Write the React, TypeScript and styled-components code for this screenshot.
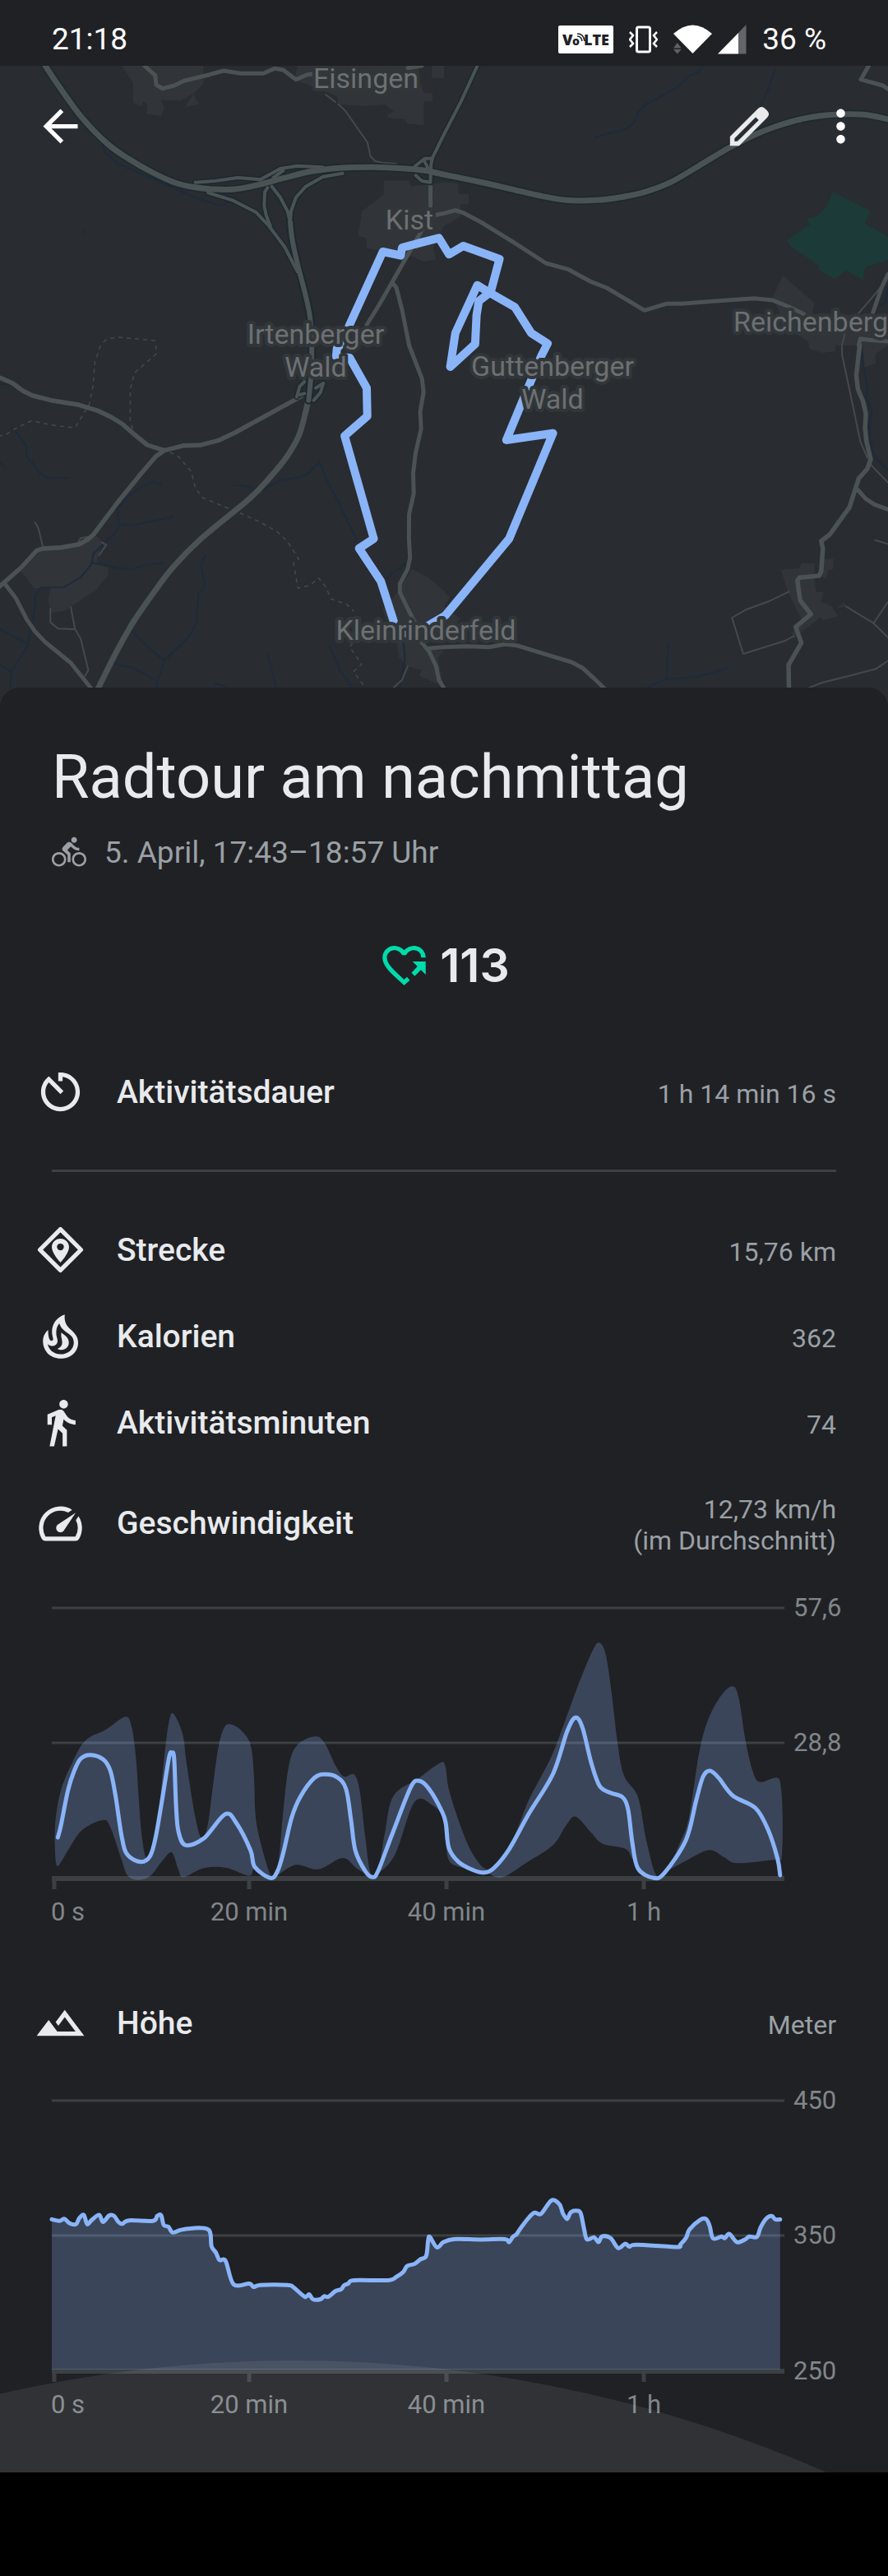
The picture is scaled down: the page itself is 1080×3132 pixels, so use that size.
import React from "react";
import styled, { createGlobalStyle } from "styled-components";
import { MdArrowBack, MdDirectionsBike, MdDirectionsWalk, MdMoreVert } from "react-icons/md";

const color = {
  surface: "#202124",
  text: "#e8eaed",
  textDim: "#9aa0a6",
  axis: "#80868b",
  line: "#3c4043",
  accent: "#8ab4f8",
  points: "#00dbac",
  land: "#292c31",
  town: "#313439",
  road: "#4b5254",
  casing: "#1b2930",
  water: "#1d2b3a",
  forest: "#1b3a38",
  place: "#6d7073",
  halo: "#313639",
};

/* ---------- geometry helpers ---------- */

type Point = [number, number];
type Sheet = { x: number; y: number; kx: number; ky: number };

const sheet = (x: number, y: number, ky = 3): Sheet => ({ x, y, kx: 2.9037, ky });

const plot = (s: Sheet, coords: string): Point[] =>
  coords
    .trim()
    .split(/\s+/)
    .map((pair) => {
      const [x, y] = pair.split(",").map(Number);
      return [s.x + x / s.kx, s.y + y / s.ky];
    });

const fmt = (n: number) => n.toFixed(1);

const polyline = (points: Point[]) => "M" + points.map(([x, y]) => `${fmt(x)} ${fmt(y)}`).join("L");

const smooth = (p: Point[]) => {
  let d = `M${fmt(p[0][0])} ${fmt(p[0][1])}`;
  for (let i = 0; i < p.length - 1; i++) {
    const a = p[i - 1] ?? p[i];
    const b = p[i];
    const c = p[i + 1];
    const e = p[i + 2] ?? c;
    d += `C${fmt(b[0] + (c[0] - a[0]) / 6)} ${fmt(b[1] + (c[1] - a[1]) / 6)} ${fmt(c[0] - (e[0] - b[0]) / 6)} ${fmt(
      c[1] - (e[1] - b[1]) / 6,
    )} ${fmt(c[0])} ${fmt(c[1])}`;
  }
  return d;
};

/* ---------- map data, one sheet per quadrant ---------- */

const NW = sheet(0, 0);
const NE = sheet(540, 0);
const SW = sheet(0, 420);
const SE = sheet(540, 420);

const lines = (s: Sheet, list: string[]) => list.map((c) => polyline(plot(s, c))).join("");

const towns = [
  ...[
    "430,240 470,300 470,375 500,390 505,370 520,380 517,415 570,424 580,390 568,365 640,367 685,340 718,305 718,240",
    "685,340 690,360 705,378 652,392",
    "1050,240 1040,290 1190,350 1195,380 1285,387 1360,382 1390,408 1368,418 1370,430 1430,435 1440,452 1497,457 1497,370 1528,370 1528,342 1497,338 1480,290 1480,240",
    "1525,240 1525,285 1568,285 1568,240",
  ].map((c) => plot(NW, c)),
  [
    ...plot(NW, "1355,658 1445,658 1450,680 1568,665"),
    ...plot(NE, "50,668 52,708 88,708 88,745 58,745 60,790 0,825"),
    ...plot(NW, "1530,905 1540,945 1500,955 1455,935 1295,905 1293,868 1265,860 1278,770 1355,710"),
  ],
  plot(NE, "1197,1005 1308,1105 1300,1145 1568,1150 1568,1260 1290,1260 1285,1245 1215,1200 1160,1085"),
  plot(SW, "150,745 280,730 340,695 362,718 340,790 382,808 382,835 340,892 225,970 180,975 170,930 178,885 120,885 75,825 130,765"),
  [
    ...plot(SW, "1455,815 1510,845 1568,895"),
    ...plot(SE, "20,918 0,950 60,1000"),
    ...plot(
      SW,
      "1490,1085 1485,1100 1568,1115 1545,1140 1568,1245 1480,1205 1490,1185 1440,1170 1410,1140 1400,1085 1350,960 1400,905",
    ),
  ],
  ...[
    "1190,818 1255,812 1262,795 1308,795 1308,860 1315,900 1340,900 1332,935 1370,952 1393,988 1340,1002 1330,990 1235,1070 1228,1050 1262,1000 1215,900",
    "1340,780 1375,778 1375,815 1358,818 1350,850 1335,845",
    "1480,0 1568,0 1525,30 1525,65 1485,80",
    "1287,0 1382,0 1382,22 1335,27 1290,12",
    "1390,958 1412,935 1422,952",
  ].map((c) => plot(SE, c)),
];

const forest = polyline(
  plot(
    NE,
    "1372,700 1505,768 1487,815 1568,862 1568,950 1487,975 1480,1022 1420,987 1380,1018 1322,985 1325,970 1225,900 1210,877 1290,820 1283,798 1320,785 1350,755",
  ),
);

const water =
  lines(NW, ["365,530 370,555 420,600 490,630 600,680 700,725 770,748 795,746 805,735", "298,835 300,850"]) +
  lines(NE, [
    "910,240 900,263 870,275 820,320 770,350 715,380 685,410 670,450 640,472 580,487 535,500",
    "1170,250 1145,325 1120,385",
    "1568,1045 1558,1105 1540,1115",
  ]) +
  lines(SW, [
    "0,142 45,140",
    "0,427 18,445",
    "40,300 60,320 95,370 92,400 140,465 165,482 240,483",
    "568,505 540,497 500,515 440,560 415,595 420,655 410,680 330,760 322,800 285,845 225,882 145,883 125,910 122,960 100,1090 40,1190 35,1250",
    "420,655 480,653 610,625",
    "322,792 420,812 465,817 520,800 575,793",
    "0,1035 100,1090",
    "0,1165 40,1190",
    "725,765 710,800 722,870 700,910 695,1010 670,1060 580,1150 550,1248",
    "468,1045 510,1090 580,1150",
    "400,1160 470,1175 550,1223",
    "825,510 885,515 895,528",
    "935,522 990,493 1060,480 1090,465 1128,425 1165,515 1190,560 1260,710",
    "1355,858 1430,795",
    "945,1125 975,1248",
    "1163,1095 1200,1185 1243,1245",
    "755,1230 800,1245",
    "1425,1085 1430,1145 1410,1248",
  ]) +
  lines(SE, [
    "720,1248 780,1218 895,1208 1000,1178",
    "792,1090 785,1218",
    "1470,0 1480,70 1495,150 1492,190 1512,240 1500,290 1515,400 1568,455",
  ]);

const motorway = smooth([
  ...plot(
    NW,
    "160,240 205,310 290,430 380,525 455,580 540,630 615,665 680,682 750,690 830,690 920,672 1000,650 1100,625 1210,612 1320,610 1420,614 1500,622",
  ),
  ...plot(
    NE,
    "0,637 110,660 230,688 330,712 430,730 540,730 620,720 710,700 800,665 900,605 1000,543 1090,495 1170,462 1260,435 1350,420 1480,418 1568,435",
  ),
]);

const ramps =
  lines(NW, [
    "735,703 820,730 905,775 950,825 1005,900 1050,990",
    "945,685 935,700 933,750 940,785 955,825",
    "1025,810 1028,770 1045,720 1080,680 1140,645 1210,632",
    "960,680 990,720 1015,770 1025,810",
    "690,665 760,660 840,648 920,655 990,615 1050,605 1140,610",
    "965,648 1000,622",
    "1465,607 1500,578 1527,578 1522,600 1520,665 1490,660 1468,640",
    "1500,590 1510,610",
  ]) +
  polyline([...plot(NW, "1525,580"), ...plot(NE, "0,490 60,370 118,240")]) +
  lines(SW, ["1048,188 1058,150 1075,132", "1060,180 1075,175", "1108,200 1132,172 1142,138 1115,155"]);

const trunk = smooth([
  ...plot(NW, "1025,810 1033,880 1055,980 1080,1080 1095,1160"),
  ...plot(SW, "1101,0 1099,100 1090,200"),
]);

const roads =
  lines(NW, [
    "510,240 548,275 552,310 575,323 615,312 650,295 740,272 790,258 850,268 930,268 970,250 1000,255 1045,290 1085,272 1105,270",
    "1440,248 1490,240",
    "1520,680 1520,750",
    "1490,840 1440,930 1390,1020 1340,1110 1295,1185",
  ]) +
  polyline([
    ...plot(NW, "1535,785"),
    ...plot(
      NE,
      "0,778 40,767 65,775 130,810 240,880 360,960 440,983 520,1028 575,1050 640,1090 708,1132 785,1108 840,1108 960,1098 1095,1088 1160,1095 1220,1120 1270,1145",
    ),
  ]) +
  lines(NE, ["1500,240 1472,290 1550,312 1568,325", "1568,1000 1545,1050 1515,1140", "1465,1260 1470,1235 1500,1240 1568,1245"]) +
  polyline([
    ...plot(NW, "1385,1030 1400,1050 1420,1130"),
    ...plot(
      SW,
      "1445,0 1490,120 1496,170 1484,240 1487,305 1468,390 1459,465 1461,540 1445,615 1444,700 1448,775 1440,815 1412,870 1412,900 1440,960 1465,1010 1490,1085 1515,1115 1540,1170 1550,1220 1568,1250",
    ),
  ]) +
  polyline([
    ...plot(SW, "1515,1105"),
    ...plot(SE, "0,1100 80,1097 160,1100 215,1090 260,1095 360,1127 450,1155 490,1177 525,1210 570,1255"),
  ]) +
  lines(SE, ["1460,525 1490,560 1520,580 1568,598"]) +
  lines(SW, ["15,867 55,920 95,1000 125,1045 160,1082 250,1158 325,1255"]);

const mainRoads =
  lines(SE, [
    "1468,0 1456,110 1462,160 1480,205 1490,250 1487,300 1492,350 1507,415 1495,450 1465,485 1432,590 1362,690 1332,713 1338,740 1332,825 1325,840 1255,847 1248,858 1258,930 1296,980 1242,1027 1262,1085 1217,1165 1218,1255",
  ]) +
  lines(SW, [
    "0,118 45,138 80,165 115,183 180,200 280,217 345,238 390,260 430,285 475,325 520,363 580,383 650,365 705,364 770,347 830,318 1065,185",
    "580,383 550,405 500,465 410,580 330,690 310,708 280,725 215,737 150,741 130,748 75,810 0,878",
  ]);

const southRoad = smooth(
  plot(SW, "1092,180 1080,240 1055,330 1010,410 950,485 880,560 710,705 610,810 530,920 470,1010 410,1120 340,1265"),
);

const lanes =
  lines(NW, ["1150,345 1185,372", "1195,380 1220,405 1298,520 1308,570 1325,588 1350,593 1400,597"]) +
  lines(NE, ["1540,1050 1500,1100 1462,1145", "1415,1220 1405,1260"]) +
  lines(SW, [
    "123,645 135,665 152,735",
    "275,720 285,703 320,697",
    "360,718 375,728 350,765",
    "178,960 178,1010 205,1033 265,1035",
    "250,955 265,1035 285,1070 312,1185 300,1205",
    "1440,1170 1420,1220 1390,1248",
  ]) +
  lines(SE, [
    "1405,0 1406,35 1440,200 1470,350 1495,410",
    "1507,435 1568,500",
    "1218,898 1150,932 1070,962 1017,993 1057,1125 1205,1077 1235,1060",
    "1568,935 1517,1013",
    "1420,952 1517,1013 1568,1065",
    "1290,1248 1335,1230 1450,1200 1525,1180 1568,1150",
    "1522,710 1568,724",
  ]);

const boundary =
  lines(NW, ["365,1248 380,1235 420,1230 550,1243"]) +
  lines(SW, [
    "355,0 335,60 328,150 315,215 265,300 200,293 110,275 60,300 20,325 0,330",
    "550,0 553,30 475,100 460,160 460,280 475,325",
    "600,390 630,405 675,460 690,520 715,555 780,583 850,612 920,645 980,680 1015,715 1055,780 1037,795 1052,885 1095,875 1125,848 1150,880 1170,925 1225,945 1250,970",
    "1245,1085 1235,1100 1277,1163 1248,1190 1290,1248",
  ]);

const route = polyline([
  ...plot(SW, "1235,45 1187,40 1190,10"),
  ...plot(NW, "1210,1250 1232,1190 1352,918 1415,932 1420,903 1550,868"),
  ...plot(NE, "18,928 68,897 196,945 165,1065 123,1098 115,1150 110,1255"),
  ...plot(SE, "22,78"),
  ...plot(NE, "40,1215 118,1040 165,1070 250,1120 308,1215 366,1253"),
  ...plot(SE, "345,35 220,345 385,320 230,705 5,985"),
  ...plot(SW, "1515,1020 1488,1050 1432,1050"),
]);

const routeWest = polyline(plot(SW, "1235,45 1295,155 1297,258 1217,330 1320,705 1268,740 1345,860 1390,1005"));

const places: { name: string; x: number; y: number }[] = [
  { name: "Eisingen", x: 445, y: 107 },
  { name: "Kist", x: 498, y: 279 },
  { name: "Irtenberger", x: 384, y: 418 },
  { name: "Wald", x: 384, y: 458 },
  { name: "Guttenberger", x: 672, y: 457 },
  { name: "Wald", x: 672, y: 497 },
  { name: "Reichenberg", x: 986, y: 403 },
  { name: "Kleinrinderfeld", x: 518, y: 778 },
];

/* ---------- chart data ---------- */

const speedL = sheet(0, -2);
const speedR = sheet(540, -2);
const heightL = sheet(0, -101, 2.2022);
const heightR = sheet(540, -101, 2.2022);

const speedLine = smooth([
  ...plot(
    speedL,
    "204,942 215,900 240,770 262,700 285,655 320,641 365,658 390,700 408,790 430,940 450,1005 497,1031 530,1010 550,940 575,790 597,650 607,634 615,655 622,830 630,920 655,970 720,945 795,857 835,890 885,990 900,1050 955,1090 980,1065 1000,1000 1030,870 1060,795 1110,725 1147,712 1190,722 1222,765 1240,880 1255,990 1290,1065 1315,1087 1335,1065 1385,930 1450,760 1480,736 1515,765 1562,850",
  ),
  ...plot(
    speedR,
    "7,895 17,980 50,1030 100,1060 140,1070 175,1055 230,985 300,855 385,710 435,555 465,505 490,545 520,670 550,755 590,780 630,795 650,840 665,960 685,1055 740,1090 780,1070 855,950 890,810 915,720 940,699 970,725 1020,790 1100,835 1145,915 1178,1020 1187,1080",
  ),
]);

const speedBand =
  smooth([
    ...plot(
      speedL,
      "193,950 197,870 215,770 250,680 300,590 375,548 443,502 465,540 480,650 490,800 500,930 515,1015 535,990 560,850 580,650 595,530 611,490 645,565 660,680 690,870 712,945 733,900 750,770 770,620 790,545 812,529 850,550 885,605 897,720 903,870 925,980 955,1080 970,1085 985,1020 1000,850 1020,680 1050,605 1110,574 1145,595 1185,680 1215,720 1250,712 1270,770 1290,940 1308,1070 1335,1065 1360,920 1390,790 1480,725 1555,670",
    ),
    ...plot(
      speedR,
      "5,685 18,770 60,905 100,1000 150,1058 200,1020 230,975 260,910 300,805 380,645 430,510 480,370 525,260 548,232 570,270 590,400 612,590 635,715 685,795 715,955 750,1080 790,1055 830,970 865,870 900,640 930,520 975,430 1017,391 1040,430 1065,590 1090,700 1115,740 1175,724 1190,760 1196,880 1192,1020 1175,1022 1035,1036 990,1015 935,988 850,1030 780,1070 740,1092 690,1065 665,1020 640,983 560,965 520,925 465,866 430,900 385,970 290,1035 205,1088 150,1070 100,1060 40,1045 15,1020 5,950",
    ),
    ...plot(
      speedL,
      "1560,860 1520,820 1482,801 1450,840 1395,1005 1335,1075 1315,1087 1260,1055 1210,1017 1125,1058 1045,1042 980,1080 955,1092 900,1055 880,1082 800,1053 720,1054 648,1087 630,1060 607,997 575,1025 530,1083 485,1097 450,1080 430,1025 390,905 362,879 290,915 245,980 205,1046 195,1010",
    ),
  ]) + "Z";

const heightLine = smooth([
  ...plot(
    heightL,
    "183,613 210,617 228,612 245,623 268,626 280,610 296,601 308,626 325,614 350,601 364,620 385,603 403,604 418,620 432,625 455,616 540,617 555,604 569,602 578,628 595,633 610,648 640,641 700,636 735,640 744,655 747,685 763,703 775,722 797,725 825,787 880,785 895,794 920,789 1015,789 1035,794 1076,820 1092,814 1105,827 1132,827 1145,819 1160,820 1185,805 1205,800 1215,790 1230,785 1250,776 1370,776 1400,767 1425,753 1438,738 1465,732 1485,720 1505,711 1512,670 1518,660 1543,688 1566,674",
  ),
  ...plot(
    heightR,
    "35,666 130,667 215,666 230,674 243,660 257,652 275,632 300,608 320,595 343,598 380,562 408,573 420,597 435,612 448,594 470,590 483,597 495,640 505,667 530,661 546,674 558,659 588,663 615,690 640,678 655,686 680,681 820,687 835,680 855,662 867,640 905,614 925,612 938,630 950,664 980,659 992,663 1008,652 1035,674 1065,666 1078,659 1105,660 1118,635 1138,611 1157,604 1170,613 1187,613",
  ),
]);

const heightArea = heightLine + "V360H63Z";

/* ---------- styles ---------- */

const GlobalStyle = createGlobalStyle`
  * { box-sizing: border-box; }
  body { margin: 0; background: #000; }
`;

const Screen = styled.div`
  font-family: Roboto, "Noto Sans", sans-serif;
  color: ${color.text};
  background: ${color.surface};
`;

const StatusBar = styled.header`
  display: flex;
  align-items: center;
  height: 80px;
  padding: 16px 75px 0 63px;
  font-size: 37px;
  line-height: 44px;
  color: #fff;
`;

const StatusIcons = styled.div`
  display: flex;
  align-items: center;
  gap: 19px;
  margin-left: auto;
  svg { display: block; }
`;

const Signals = styled.div`
  display: flex;
  gap: 7px;
`;

const MapArea = styled.section`
  position: relative;
  background: ${color.land};
`;

const MapDrawing = styled.svg`
  display: block;
  width: 100%;
  height: auto;
`;

const Place = styled.text`
  font-size: 34px;
  text-anchor: middle;
  fill: ${color.place};
  stroke: ${color.halo};
  stroke-width: 8px;
  stroke-linejoin: round;
  paint-order: stroke;
`;

const AppBar = styled.nav`
  position: absolute;
  inset: 0 0 auto;
  display: flex;
  align-items: center;
  gap: 48px;
  height: 147px;
  padding: 0 26px 0 42px;
`;

const IconButton = styled.button<{ $push?: boolean }>`
  display: grid;
  place-items: center;
  width: 63px;
  height: 63px;
  margin: 0 0 0 ${(p) => (p.$push ? "auto" : "0")};
  padding: 0;
  border: 0;
  background: none;
  color: #fff;
  svg { width: 63px; height: 63px; }
`;

const Card = styled.main`
  position: relative;
  overflow: hidden;
  margin-top: -24px;
  padding-top: 65px;
  border-radius: 24px 24px 0 0;
  background: ${color.surface};
`;

const Heading = styled.div`
  padding: 0 63px;
`;

const Title = styled.h1`
  margin: 0 0 26px;
  font-size: 74px;
  font-weight: 400;
  line-height: 88px;
`;

const When = styled.p`
  display: flex;
  gap: 22px;
  margin: 0;
  font-size: 37px;
  line-height: 44px;
  color: ${color.textDim};
  svg { width: 42px; height: 42px; }
`;

const Score = styled.div`
  display: flex;
  justify-content: center;
  align-items: center;
  gap: 12px;
  height: 63px;
  margin: 83px 0 70px;
  font-family: Inter, Roboto, sans-serif;
  font-size: 57px;
  font-weight: 600;
  line-height: 63px;
`;

const Icon = styled.svg`
  flex: none;
  width: 63px;
  height: 63px;
  fill: currentColor;
`;

const HeartIcon = styled(Icon)`
  color: ${color.points};
`;

const Stats = styled.dl`
  margin: 0;
`;

const Row = styled.div<{ $tall?: boolean; $gap?: boolean }>`
  display: flex;
  align-items: center;
  min-height: ${(p) => (p.$tall ? 140 : 105)}px;
  margin-bottom: ${(p) => (p.$gap ? 9 : 0)}px;
  padding: 0 63px 0 42px;
  & > svg { width: 63px; height: 63px; flex: none; }
`;

const Label = styled.dt`
  margin-left: 37px;
  font-size: 39px;
  font-weight: 500;
  line-height: 46px;
`;

const Value = styled.dd`
  margin: 0 0 0 auto;
  padding-top: 4px;
  font-size: 32px;
  line-height: 38px;
  text-align: right;
  color: ${color.textDim};
`;

const Divider = styled.hr`
  height: 3px;
  margin: 42px 63px;
  border: 0;
  background: ${color.line};
`;

const ChartDrawing = styled.svg`
  display: block;
  width: 100%;
  height: auto;
`;

const AxisText = styled.text<{ $middle?: boolean }>`
  font-size: 31px;
  fill: ${color.axis};
  text-anchor: ${(p) => (p.$middle ? "middle" : "start")};
`;

const Ripple = styled.div`
  position: absolute;
  left: calc(33% - 1605px);
  bottom: -3078px;
  width: 3214px;
  height: 3214px;
  border-radius: 50%;
  background: rgba(255, 255, 255, 0.08);
  pointer-events: none;
`;

const SystemBar = styled.footer`
  height: 126px;
  background: #000;
`;

/* ---------- icons ---------- */

const TimerIcon = () => (
  <Icon viewBox="0 0 24 24" aria-hidden>
    <path d="M11 3v4h2V5.08c3.39.49 6 3.39 6 6.92 0 3.87-3.13 7-7 7s-7-3.13-7-7c0-1.68.59-3.22 1.58-4.42L12 13l1.41-1.41-6.8-6.8v.02C4.42 6.45 3 9.05 3 12c0 4.97 4.02 9 9 9 4.97 0 9-4.03 9-9s-4.03-9-9-9z" />
  </Icon>
);

const DistanceIcon = () => (
  <Icon viewBox="0 0 24 24" aria-hidden>
    <path d="M12 2.5 21.5 12 12 21.5 2.5 12z" fill="none" stroke="currentColor" strokeWidth="2" strokeLinejoin="round" />
    <path
      fillRule="evenodd"
      d="M12 6.9c-2.2 0-4 1.7-4 3.9 0 2.9 4 7.1 4 7.1s4-4.2 4-7.1c0-2.2-1.8-3.9-4-3.9zm0 5.4a1.6 1.6 0 1 1 0-3.2 1.6 1.6 0 0 1 0 3.2z"
    />
  </Icon>
);

const FlameIcon = () => (
  <Icon viewBox="0 0 24 24" aria-hidden>
    <path
      fillRule="evenodd"
      d="M14 2C13.8 4.3 14.2 6.3 15.7 7.9 17.6 9.9 20.3 11.5 20.2 15.2 20.1 19.3 16.7 22.4 12.1 22.4 7.4 22.4 4 19.1 3.9 14.4 3.9 12.2 4.8 10.4 6.3 9.1 6.3 11 6.5 12.8 7.1 13.7 7.6 14.4 8.5 14.2 8.6 13.6 8.7 12.7 8 11.5 8.1 9.4 8.3 6 10.7 3 14 2zM11.5 6.1C10.3 7.4 9.9 9.2 10.1 11.4 10.3 12.8 10.9 13.7 10.6 14.9 10.3 16.1 9.2 16.7 8.1 16.6 7.2 16.5 6.6 16.1 6.1 15.7 6.7 18.5 9.1 20.4 12.1 20.4 15.5 20.4 18.1 18.1 18.2 15.1 18.2 13.1 17.4 12 16.1 11.1 14 9.7 12.2 8.5 11.5 6.1z"
    />
    <path d="M12.4 10.4C14.2 11.7 15.8 12.8 15.9 14.8 16 16.8 14.6 18.3 12.6 18.4 11.8 18.4 11.1 18.2 10.6 17.9 12 17.4 12.9 16.3 12.8 14.7 12.8 13.2 12.1 12.4 12.4 10.4z" />
  </Icon>
);

const SpeedIcon = () => (
  <Icon viewBox="0 0 24 24" aria-hidden>
    <path d="M20.38 8.57l-1.23 1.85a8 8 0 0 1-.22 7.58H5.07A8 8 0 0 1 15.58 6.85l1.85-1.23A10 10 0 0 0 3.35 19a2 2 0 0 0 1.72 1h13.85a2 2 0 0 0 1.74-1 10 10 0 0 0-.27-10.44zm-9.79 6.84a2 2 0 0 0 2.83 0l5.66-8.49-8.49 5.66a2 2 0 0 0 0 2.83z" />
  </Icon>
);

const MountainIcon = () => (
  <Icon viewBox="0 0 24 24" aria-hidden>
    <path d="M14 6l-4.22 5.63 1.25 1.67L14 9.33 19 16h-8.46l-4.01-5.37L1 18h22L14 6z" />
  </Icon>
);

const PencilIcon = () => (
  <Icon viewBox="0 0 24 24" aria-hidden>
    <path
      fill={color.text}
      fillRule="evenodd"
      d="M3 16.8 16 3.8Q17.6 2.3 19.2 3.8L20.2 4.8Q21.7 6.4 20.2 8L7.2 21H3zM5.1 17.6V19H6.4L16.3 9.1 14.9 7.8z"
    />
  </Icon>
);

const ScoreHeart = () => (
  <HeartIcon viewBox="0 0 24 24" aria-hidden>
    <path d="M22 8.5h-2.1C19.9 6.5 18.5 5 16.5 5c-1.54 0-3.04.99-3.56 2.36h-1.87C10.54 5.99 9.04 5 7.5 5 5.5 5 4 6.5 4 8.5c0 2.9 3.14 5.74 7.9 10.05l.1.1 1.3-1.2 1.35 1.5L12 21.35l-1.45-1.32C5.4 15.36 2 12.28 2 8.5 2 5.42 4.42 3 7.5 3c1.74 0 3.41.81 4.5 2.09C13.09 3.81 14.76 3 16.5 3 19.58 3 22 5.42 22 8.5z" />
    <path d="M15.9 10.3H22v6.1l-2.2-2.2-2.9 2.8-1.5-1.5 2.8-2.9z" />
  </HeartIcon>
);

const VolteBadge = () => (
  <svg width="67" height="34" viewBox="0 0 67 34" role="img" aria-label="VoLTE">
    <rect width="67" height="34" rx="2" fill="#fff" />
    <g fill={color.surface} fontFamily="Open Sans" fontWeight="800">
      <text x="5" y="24" fontSize="18">V</text>
      <text x="17" y="24" fontSize="14">o</text>
      <text x="31" y="24" fontSize="18">LTE</text>
    </g>
    <path d="M23 13q5 0 6 6M23 10q8 0 9 9" fill="none" stroke={color.surface} strokeWidth="1.6" />
  </svg>
);

const VibrateIcon = () => (
  <svg width="35" height="34" viewBox="0 0 35 34" fill="none" stroke="#fff" aria-hidden>
    <rect x="9.5" y="2" width="16" height="30" rx="2" strokeWidth="3" />
    <path d="M1 8l4 4-4 5 4 5-4 4M34 8l-4 4 4 5-4 5 4 4" strokeWidth="2.5" />
  </svg>
);

const WifiIcon = () => (
  <svg width="47" height="36" viewBox="0 0 47 36" aria-hidden>
    <path d="M0 11Q23.5-10 47 11L23.5 35z" fill="#fff" />
    <path d="M0 28.5l4.800-6.5 4.8 6.5zM0 30l4.8 5.5L9.6 30z" fill="#5f6164" />
  </svg>
);

const CellIcon = () => (
  <svg width="35" height="36" viewBox="0 0 35 36" aria-hidden>
    <path d="M25 10L34.5 0V35.5H25z" fill="#646568" />
    <path d="M0 35.5L25 10V35.5z" fill="#fff" />
  </svg>
);

/* ---------- sections ---------- */

const RouteMap = () => (
  <MapDrawing viewBox="0 80 1080 780" role="img" aria-label="Karte der Strecke">
    {towns.map((t, i) => (
      <path key={i} d={polyline(t) + "Z"} fill={color.town} />
    ))}
    <path d={forest + "Z"} fill={color.forest} />
    <g fill="none" strokeLinecap="round" strokeLinejoin="round">
      <path d={water} stroke={color.water} strokeWidth="2" />
      <path d={boundary} stroke="#46494c" strokeWidth="1.5" strokeDasharray="5 5" strokeLinecap="butt" />
      <path d={lanes} stroke="#46494c" strokeWidth="2" />
      <path d={roads} stroke={color.road} strokeWidth="5" />
      <path d={mainRoads} stroke={color.road} strokeWidth="5.5" />
      <path d={southRoad} stroke={color.road} strokeWidth="7" />
      <path d={ramps} stroke={color.casing} strokeWidth="7" />
      <path d={motorway + trunk} stroke={color.casing} strokeWidth="10" />
      <path d={ramps} stroke={color.road} strokeWidth="4" />
      <path d={motorway} stroke={color.road} strokeWidth="7" />
      <path d={trunk} stroke={color.road} strokeWidth="6" />
      <path d={route + routeWest} stroke={color.accent} strokeWidth="10" />
    </g>
    {places.map((p, i) => (
      <Place key={i} x={p.x} y={p.y}>
        {p.name}
      </Place>
    ))}
  </MapDrawing>
);

type ChartProps = {
  name: string;
  line: string;
  area: string;
  ticks: { y: number; text: string }[];
};

const timeTicks = [
  { x: 66, label: 62, text: "0 s", middle: false },
  { x: 303, label: 303, text: "20 min", middle: true },
  { x: 543, label: 543, text: "40 min", middle: true },
  { x: 783, label: 783, text: "1 h", middle: true },
];

const Chart = ({ name, line, area, ticks }: ChartProps) => (
  <ChartDrawing viewBox="0 0 1080 485" role="img" aria-label={name}>
    <path d="M63 33H954M63 197H954" stroke={color.line} strokeWidth="3" />
    <path d="M63 362H954" stroke={color.line} strokeWidth="6" />
    {timeTicks.map((t) => (
      <path key={t.x} d={`M${t.x} 362V375`} stroke={color.line} strokeWidth="5" />
    ))}
    <path d={area} fill={color.accent} fillOpacity="0.25" />
    <path d={line} fill="none" stroke={color.accent} strokeWidth="5" strokeLinecap="round" strokeLinejoin="round" />
    {ticks.map((t) => (
      <AxisText key={t.text} x={965} y={t.y + 10}>
        {t.text}
      </AxisText>
    ))}
    {timeTicks.map((t) => (
      <AxisText key={t.text} x={t.label} y={413} $middle={t.middle}>
        {t.text}
      </AxisText>
    ))}
  </ChartDrawing>
);

export default function App() {
  return (
    <Screen>
      <GlobalStyle />
      <StatusBar>
        <span>21:18</span>
        <StatusIcons>
          <VolteBadge />
          <VibrateIcon />
          <Signals>
            <WifiIcon />
            <CellIcon />
          </Signals>
          <span>36 %</span>
        </StatusIcons>
      </StatusBar>

      <MapArea>
        <RouteMap />
        <AppBar>
          <IconButton type="button" aria-label="Zurück">
            <MdArrowBack />
          </IconButton>
          <IconButton type="button" aria-label="Bearbeiten" $push>
            <PencilIcon />
          </IconButton>
          <IconButton type="button" aria-label="Weitere Optionen">
            <MdMoreVert />
          </IconButton>
        </AppBar>
      </MapArea>

      <Card>
        <Heading>
          <Title>Radtour am nachmittag</Title>
          <When>
            <MdDirectionsBike aria-hidden />
            5. April, 17:43–18:57 Uhr
          </When>
        </Heading>

        <Score>
          <ScoreHeart />
          113
        </Score>

        <Stats>
          <Row>
            <TimerIcon />
            <Label>Aktivitätsdauer</Label>
            <Value>1 h 14 min 16 s</Value>
          </Row>
        </Stats>
        <Divider />
        <Stats>
          <Row>
            <DistanceIcon />
            <Label>Strecke</Label>
            <Value>15,76 km</Value>
          </Row>
          <Row>
            <FlameIcon />
            <Label>Kalorien</Label>
            <Value>362</Value>
          </Row>
          <Row>
            <MdDirectionsWalk aria-hidden />
            <Label>Aktivitätsminuten</Label>
            <Value>74</Value>
          </Row>
          <Row $tall>
            <SpeedIcon />
            <Label>Geschwindigkeit</Label>
            <Value>
              12,73 km/h
              <br />
              (im Durchschnitt)
            </Value>
          </Row>
        </Stats>
        <Chart
          name="Geschwindigkeit"
          line={speedLine}
          area={speedBand}
          ticks={[
            { y: 33, text: "57,6" },
            { y: 197, text: "28,8" },
          ]}
        />

        <Stats>
          <Row $gap>
            <MountainIcon />
            <Label>Höhe</Label>
            <Value>Meter</Value>
          </Row>
        </Stats>
        <Chart
          name="Höhe"
          line={heightLine}
          area={heightArea}
          ticks={[
            { y: 33, text: "450" },
            { y: 197, text: "350" },
            { y: 362, text: "250" },
          ]}
        />
        <Ripple aria-hidden />
      </Card>
      <SystemBar />
    </Screen>
  );
}
